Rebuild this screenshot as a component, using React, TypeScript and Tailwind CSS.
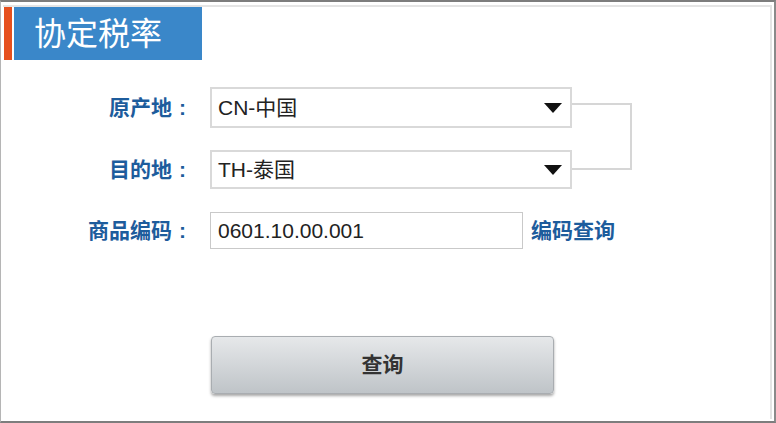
export default function App() {
  const font = { fontFamily: '"Liberation Sans", Arial, "Noto Sans CJK SC", sans-serif' };

  return (
    <div
      style={font}
      className="w-[776px] h-[423px] bg-white border-t-2 border-b-2 border-l border-r-2 border-t-[#7d7d7d] border-b-[#7d7d7d] border-l-[#b5b5b5] border-r-[#8a8a8a] px-[2px] pt-[3px] pb-[2px]"
    >
      <div className="h-full border-t-2 border-r-2 border-[#e4e4e4] bg-white">
        {/* Header tab */}
        <div className="flex h-[53px] gap-[2px] pl-[1px]">
          <div className="w-[8px] bg-[#e6501e]" />
          <div className="w-[188px] bg-[#3a87c9] flex items-center pl-[20px] text-white text-[32px] leading-none">
            协定税率
          </div>
        </div>

        {/* Origin / destination with bracket */}
        <div className="flex mt-[27px]">
          <div className="flex flex-col gap-[22px]">
            <Row label="原产地">
              <Select value="CN-中国" h="h-[41px]" />
            </Row>
            <Row label="目的地">
              <Select value="TH-泰国" h="h-[39px]" />
            </Row>
          </div>
          <div className="w-[60px] h-[67px] mt-[16px] border-t-2 border-r-2 border-b-2 border-[#d6d6d6]" />
        </div>

        {/* Goods code */}
        <div className="mt-[23px] flex items-center">
          <Row label="商品编码">
            <div className="w-[313px] h-[37px] border border-[#c9c9c9] flex items-center pl-[7px] text-[21px] text-[#222]">
              0601.10.00.001
            </div>
          </Row>
          <span className="ml-[8px] text-[21px] font-bold text-[#1d5c9c]">编码查询</span>
        </div>

        {/* Submit */}
        <div className="mt-[87px] pl-[208px]">
          <button className="w-[343px] h-[58px] rounded-[4px] border border-[#a9adb1] bg-gradient-to-b from-[#e6e8ea] to-[#bfc4c8] shadow-[0_2px_3px_rgba(0,0,0,0.35)] text-[21px] font-bold text-[#333]">
            查询
          </button>
        </div>
      </div>
    </div>
  );
}

function Row({ label, children }: { label: string; children: React.ReactNode }) {
  return (
    <div className="flex items-center">
      <div className="w-[190px] flex justify-end text-[21px] font-bold text-[#1d5c9c]">
        <span>{label}</span>
        <span className="w-[21px] text-center">:</span>
      </div>
      <div className="ml-[17px]">{children}</div>
    </div>
  );
}

function Select({ value, h }: { value: string; h: string }) {
  return (
    <div className={`w-[362px] ${h} border-2 border-[#d9d9d9] flex items-center justify-between pl-[6px] pr-[8px] text-[21px] text-[#222]`}>
      <span>{value}</span>
      <svg width="18" height="10" viewBox="0 0 18 10">
        <path d="M0 0 H18 L9 10 Z" fill="#111" />
      </svg>
    </div>
  );
}
